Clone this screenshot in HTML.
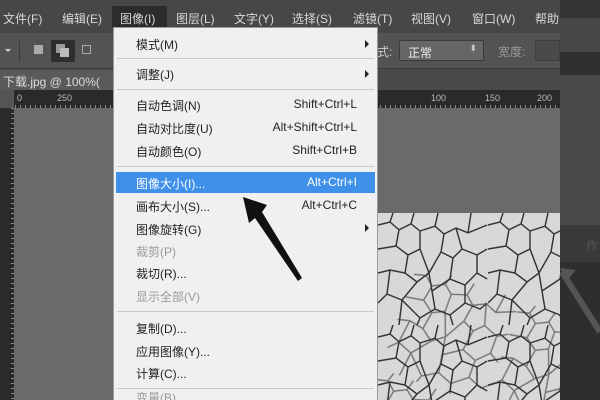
<!DOCTYPE html>
<html><head><meta charset="utf-8"><style>
*{margin:0;padding:0;box-sizing:border-box}
body{width:600px;height:400px;overflow:hidden;position:relative;background:#6a6a6a;font-family:"Liberation Sans","Noto Sans CJK SC",sans-serif}
.a{position:absolute}
.mb{left:0;top:0;width:560px;height:33px;background:#474747;color:#d8d8d8;font-size:12px}
.mb span{position:absolute;top:10px}
.menu{left:113px;top:27px;width:265px;height:373px;background:#f0f0f0;border:1px solid #999;border-bottom:none;font-size:12px;color:#222;overflow:hidden}
.it{position:absolute;left:22px}
.sc{position:absolute;right:20px}
.sep{position:absolute;left:3px;right:3px;height:1px;background:#c8c8c8}
.dis{color:#9a9a9a}
.tri{position:absolute;right:8px;width:0;height:0;border-left:4px solid #222;border-top:4px solid transparent;border-bottom:4px solid transparent}
</style></head><body>
<div class="a mb">
<span style="left:3px">文件(F)</span><span style="left:62px">编辑(E)</span>
<div class="a" style="left:112px;top:6px;width:55px;height:22px;background:#2c2c2c"></div>
<span style="left:120px">图像(I)</span><span style="left:176px">图层(L)</span>
<span style="left:234px">文字(Y)</span><span style="left:292px">选择(S)</span><span style="left:353px">滤镜(T)</span><span style="left:411px">视图(V)</span><span style="left:472px">窗口(W)</span><span style="left:535px">帮助</span>
</div>
<div class="a" style="left:0;top:33px;width:560px;height:35px;background:#535353;color:#ccc;font-size:12px">
<div class="a" style="left:5px;top:16px;border-top:3px solid #ccc;border-left:3px solid transparent;border-right:3px solid transparent"></div>
<div class="a" style="left:19px;top:8px;width:1px;height:20px;background:#3c3c3c"></div>
<div class="a" style="left:34px;top:12px;width:9px;height:9px;background:#aaa"></div>
<div class="a" style="left:51px;top:7px;width:24px;height:22px;background:#2e2e2e;border-radius:2px"></div>
<div class="a" style="left:56px;top:11px;width:9px;height:9px;background:#999"></div>
<div class="a" style="left:60px;top:15px;width:9px;height:9px;background:#bbb"></div>
<div class="a" style="left:82px;top:12px;width:9px;height:9px;border:1px solid #aaa"></div>
<span class="a" style="left:377px;top:10px">式:</span>
<div class="a" style="left:399px;top:7px;width:85px;height:21px;background:#666;border:1px solid #3a3a3a;border-radius:2px"><span class="a" style="left:8px;top:3px;color:#eee">正常</span><span class="a" style="right:6px;top:2px;font-size:9px">⬍</span></div>
<span class="a" style="left:498px;top:10px;color:#999">宽度:</span>
<div class="a" style="left:535px;top:7px;width:25px;height:21px;background:#4a4a4a;border:1px solid #3e3e3e"></div>
</div>
<div class="a" style="left:0;top:68px;width:560px;height:22px;background:#4a4a4a;border-top:1px solid #3a3a3a"></div>
<div class="a" style="left:0;top:70px;width:120px;height:20px;background:#5a5a5a;color:#ddd;font-size:12px;padding:3px 0 0 3px;overflow:hidden;white-space:nowrap">下载.jpg @ 100%(</div>
<div class="a" style="left:0;top:90px;width:560px;height:18px;background:#2a2a2a;color:#bbb;font-size:9px;background-image:repeating-linear-gradient(90deg,#888 0 1px,transparent 1px 5px);background-size:100% 3px;background-repeat:no-repeat;background-position:0 15px">
<div class="a" style="left:0;top:0;width:14px;height:18px;background:#555"></div>
<span class="a" style="left:17px;top:3px">0</span><span class="a" style="left:57px;top:3px">250</span><span class="a" style="left:431px;top:3px">100</span><span class="a" style="left:485px;top:3px">150</span><span class="a" style="left:537px;top:3px">200</span>
</div>
<div class="a" style="left:0;top:108px;width:14px;height:292px;background:#2a2a2a;background-image:repeating-linear-gradient(180deg,#888 0 1px,transparent 1px 5px);background-size:3px 100%;background-repeat:no-repeat;background-position:11px 0"></div>
<div class="a" style="left:378px;top:213px;width:182px;height:187px;background:#c4c4c4;overflow:hidden">
<svg width="182" height="187">
<defs>
<filter id="n"><feTurbulence type="fractalNoise" baseFrequency="0.5" numOctaves="2" seed="3"/><feColorMatrix values="0 0 0 0 0.75  0 0 0 0 0.75  0 0 0 0 0.75  0 0 0 0.9 0"/></filter>
<pattern id="p" width="110" height="112" patternUnits="userSpaceOnUse">
<g transform="scale(0.6)" fill="none" stroke="#333" stroke-width="2.4">
<path d="M0 20 L20 15 L35 28 L55 18 L70 30 L95 22 L110 35 L130 25 L150 33 L182 20 M20 15 L25 0 M55 18 L60 0 M95 22 L100 0 M150 33 L155 0 M35 28 L30 55 L50 70 L70 60 L70 30 M110 35 L105 65 L125 75 L140 60 L130 25 M0 60 L30 55 M50 70 L45 100 L65 115 L85 100 L70 60 M85 100 L105 65 M140 60 L165 70 L182 60 M125 75 L120 110 L145 120 L165 100 L165 70 M0 100 L20 95 L45 100 M20 95 L15 135 L40 145 L65 115 M120 110 L90 130 L85 100 M90 130 L95 160 L120 170 L145 150 L145 120 M40 145 L35 187 M95 160 L70 175 L40 145 M165 100 L182 110 M145 150 L170 160 L182 150 M0 150 L15 135 M120 170 L125 187 M70 175 L65 187"/>
</g></pattern></defs>
<rect width="182" height="187" fill="#d4d4d4"/>
<rect width="182" height="187" filter="url(#n)" opacity="0.7"/>
<rect width="182" height="187" fill="url(#p)"/>
<rect width="182" height="187" fill="url(#p)" transform="translate(40 50) rotate(20)" opacity="0.6"/>
</svg></div>
<div class="a" style="left:560px;top:0;width:40px;height:400px;background:#2e2e2e;overflow:hidden">
<div class="a" style="top:0;width:40px;height:18px;background:#333"></div>
<div class="a" style="top:18px;width:40px;height:34px;background:#474747"></div>
<div class="a" style="top:52px;width:40px;height:23px;background:#303030"></div>
<div class="a" style="top:75px;width:40px;height:150px;background:#4a4a4a"></div>
<div class="a" style="top:225px;width:40px;height:37px;background:#3a3a3a;color:#555;font-size:12px;padding:12px 0 0 26px">作</div>
<svg class="a" style="top:262px" width="40" height="138"><path d="M2 10 L40 70" stroke="#555" stroke-width="6"/><path d="M0 6 L16 8 L6 20Z" fill="#555"/></svg>
</div>
<div class="a menu">
<div class="it" style="top:8px">模式(M)</div><div class="tri" style="top:12px"></div>
<div class="sep" style="top:30px"></div>
<div class="it" style="top:38px">调整(J)</div><div class="tri" style="top:42px"></div>
<div class="sep" style="top:61px"></div>
<div class="it" style="top:69px">自动色调(N)</div><div class="sc" style="top:69px">Shift+Ctrl+L</div>
<div class="it" style="top:92px">自动对比度(U)</div><div class="sc" style="top:92px">Alt+Shift+Ctrl+L</div>
<div class="it" style="top:115px">自动颜色(O)</div><div class="sc" style="top:115px">Shift+Ctrl+B</div>
<div class="sep" style="top:138px"></div>
<div class="a" style="left:2px;top:144px;width:259px;height:21px;background:#3f90e8"></div>
<div class="it" style="top:147px;color:#fff">图像大小(I)...</div><div class="sc" style="top:147px;color:#fff">Alt+Ctrl+I</div>
<div class="it" style="top:170px">画布大小(S)...</div><div class="sc" style="top:170px">Alt+Ctrl+C</div>
<div class="it" style="top:193px">图像旋转(G)</div><div class="tri" style="top:196px"></div>
<div class="it dis" style="top:215px">裁剪(P)</div>
<div class="it" style="top:237px">裁切(R)...</div>
<div class="it dis" style="top:260px">显示全部(V)</div>
<div class="sep" style="top:283px"></div>
<div class="it" style="top:292px">复制(D)...</div>
<div class="it" style="top:315px">应用图像(Y)...</div>
<div class="it" style="top:337px">计算(C)...</div>
<div class="sep" style="top:360px"></div>
<div class="it dis" style="top:364px;line-height:12px">变量(B)</div>
</div>
<svg class="a" style="left:0;top:0" width="600" height="400"><path d="M243 197 L267 205 L262 212 L302 278 L298 281 L255 218 L249 223Z" fill="#111"/></svg>
</body></html>
